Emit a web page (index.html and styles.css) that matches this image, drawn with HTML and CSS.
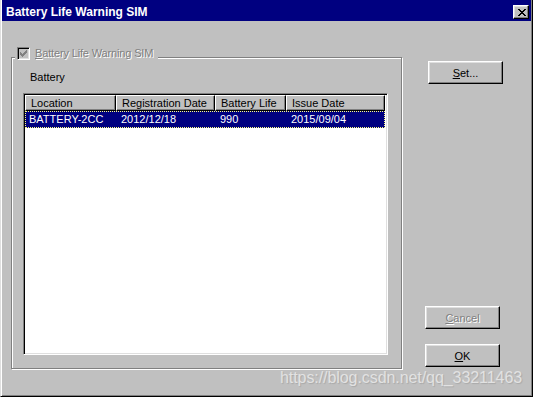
FILE: index.html
```html
<!DOCTYPE html>
<html lang="en">

<head>
    <meta charset="UTF-8">
    <title>Battery Life Warning SIM</title>
    <link rel="stylesheet" href="styles.css">
</head>

<body>
    <div class="window">
        <div class="titlebar">
            <span class="title">Battery Life Warning SIM</span>
            <button class="close-btn">
                <svg width="8" height="7" viewBox="0 0 8 7" shape-rendering="crispEdges">
                    <path fill="#000" d="M0 0h2v1h-2z M6 0h2v1h-2z M1 1h2v1h-2z M5 1h2v1h-2z M2 2h4v1h-4z M3 3h2v1h-2z M2 4h4v1h-4z M1 5h2v1h-2z M5 5h2v1h-2z M0 6h2v1h-2z M6 6h2v1h-2z" />
                </svg>
            </button>
        </div>

        <div class="client">
            <div class="group">
                <div class="group-caption">
                    <span class="checkbox">
                        <svg width="11" height="11" viewBox="0 0 11 11" shape-rendering="crispEdges">
                            <path fill="#808080" d="M8 2h1v1h-1z M7 3h2v1h-2z M2 4h1v1h-1z M6 4h3v1h-3z M2 5h2v1h-2z M5 5h3v1h-3z M2 6h5v1h-5z M3 7h3v1h-3z M4 8h1v1h-1z" />
                        </svg>
                    </span>
                    <span class="disabled-text"><u>B</u>attery Life Warning SIM</span>
                </div>

                <div class="group-label">Battery</div>

                <div class="listview">
                    <div class="lv-header">
                        <div class="lv-col">Location</div>
                        <div class="lv-col">Registration Date</div>
                        <div class="lv-col">Battery Life</div>
                        <div class="lv-col">Issue Date</div>
                    </div>
                    <div class="lv-row selected">
                        <div class="lv-cell first">BATTERY-2CC</div>
                        <div class="lv-cell">2012/12/18</div>
                        <div class="lv-cell">990</div>
                        <div class="lv-cell">2015/09/04</div>
                    </div>
                </div>
            </div>

            <div class="buttons">
                <button class="btn btn-set"><u>S</u>et...</button>
                <button class="btn btn-cancel" disabled><u>C</u>ancel</button>
                <button class="btn btn-ok"><u>O</u>K</button>
            </div>
        </div>

        <div class="watermark">https://blog.csdn.net/qq_33211463</div>
    </div>
</body>

</html>
```

FILE: styles.css
```css
body {
    margin: 0;
    width: 533px;
    height: 397px;
    overflow: hidden;
    background: #c0c0c0;
    font-family: "Liberation Sans", Arial, sans-serif;
    font-size: 11px;
    color: #000;
}

.window {
    position: relative;
    box-sizing: border-box;
    width: 533px;
    height: 397px;
    border-left: 1px solid #dfdfdf;
    border-right: 1px solid #000;
    border-bottom: 1px solid #000;
    box-shadow: inset 1px 0 #fff, inset -1px -1px #808080;
    padding: 0 1px 1px 1px;
}

/* title bar */
.titlebar {
    box-sizing: border-box;
    height: 21px;
    background: #000080;
    color: #fff;
    display: flex;
    align-items: flex-start;
    padding: 5px 2px 0 4px;
}

.title {
    font-weight: bold;
    font-size: 12px;
    line-height: 14px;
}

.close-btn {
    margin-left: auto;
    box-sizing: border-box;
    width: 16px;
    height: 14px;
    padding: 0 0 0 1px;
    background: #c0c0c0;
    border: 1px solid;
    border-color: #fff #000 #000 #fff;
    box-shadow: inset -1px -1px #808080, inset 1px 1px #dfdfdf;
    display: flex;
    align-items: center;
    justify-content: center;
}

.close-btn svg {
    display: block;
}

/* client area */
.client {
    display: flex;
    padding: 36px 0 0 9px;
}

.group {
    position: relative;
    box-sizing: border-box;
    width: 391px;
    height: 312px;
    border: 1px solid #808080;
    box-shadow: inset 1px 1px #fff, 1px 1px #fff;
    padding: 13px 11px 0 11px;
}

.group-caption {
    position: absolute;
    top: -11px;
    left: 3px;
    display: flex;
    align-items: center;
    height: 13px;
    padding: 0 5px 0 2px;
    background: #c0c0c0;
}

.checkbox {
    box-sizing: border-box;
    width: 13px;
    height: 13px;
    border: 1px solid;
    border-color: #808080 #fff #fff #808080;
    box-shadow: inset 1px 1px #000, inset -1px -1px #dfdfdf;
    background: #c0c0c0;
}

.checkbox svg {
    display: block;
}

.disabled-text {
    margin-left: 5px;
    line-height: 13px;
    letter-spacing: -0.15px;
    color: #808080;
    text-shadow: 1px 1px 0 #fff;
}

.group-label {
    line-height: 13px;
    margin-left: 7px;
}

/* list view */
.listview {
    box-sizing: border-box;
    width: 365px;
    height: 262px;
    margin-top: 9px;
    background: #fff;
    border: 1px solid;
    border-color: #808080 #fff #fff #808080;
    box-shadow: inset 1px 1px #000, inset -1px -1px #dfdfdf;
    padding: 1px;
}

.lv-header {
    display: grid;
    grid-template-columns: 91px 99px 71px 99px;
    height: 16px;
}

.lv-col {
    box-sizing: border-box;
    background: #c0c0c0;
    border: 1px solid;
    border-color: #fff #000 #000 #fff;
    box-shadow: inset -1px -1px #808080;
    padding-left: 5px;
    line-height: 14px;
    white-space: nowrap;
    overflow: hidden;
}

.lv-row {
    box-sizing: border-box;
    display: grid;
    grid-template-columns: 90px 99px 71px 98px;
    width: 360px;
    height: 17px;
    line-height: 15px;
}

.lv-row.selected {
    background: #000080;
    color: #fff;
    border: 1px dotted #ffff80;
}

.lv-cell {
    padding-left: 5px;
    white-space: nowrap;
}

.lv-cell.first {
    padding-left: 3px;
}

/* buttons */
.buttons {
    display: flex;
    flex-direction: column;
    align-items: flex-start;
    padding-top: 4px;
}

.btn {
    box-sizing: border-box;
    width: 75px;
    height: 23px;
    padding: 0;
    background: #c0c0c0;
    border: 1px solid;
    border-color: #fff #000 #000 #fff;
    box-shadow: inset -1px -1px #808080, inset 1px 1px #dfdfdf;
    font-family: "Liberation Sans", Arial, sans-serif;
    font-size: 11px;
    color: #000;
}

.btn-set {
    margin-left: 26px;
}

.btn-cancel {
    margin-left: 23px;
    margin-top: 222px;
    color: #808080;
    text-shadow: 1px 1px 0 #fff;
}

.btn-ok {
    margin-left: 23px;
    margin-top: 15px;
}

.watermark {
    position: absolute;
    left: 279px;
    top: 369px;
    font-size: 16px;
    line-height: 18px;
    letter-spacing: -0.07px;
    color: #e2e2e2;
    text-shadow: 1px 1px 1px rgba(0, 0, 0, 0.12);
    white-space: nowrap;
}
```
